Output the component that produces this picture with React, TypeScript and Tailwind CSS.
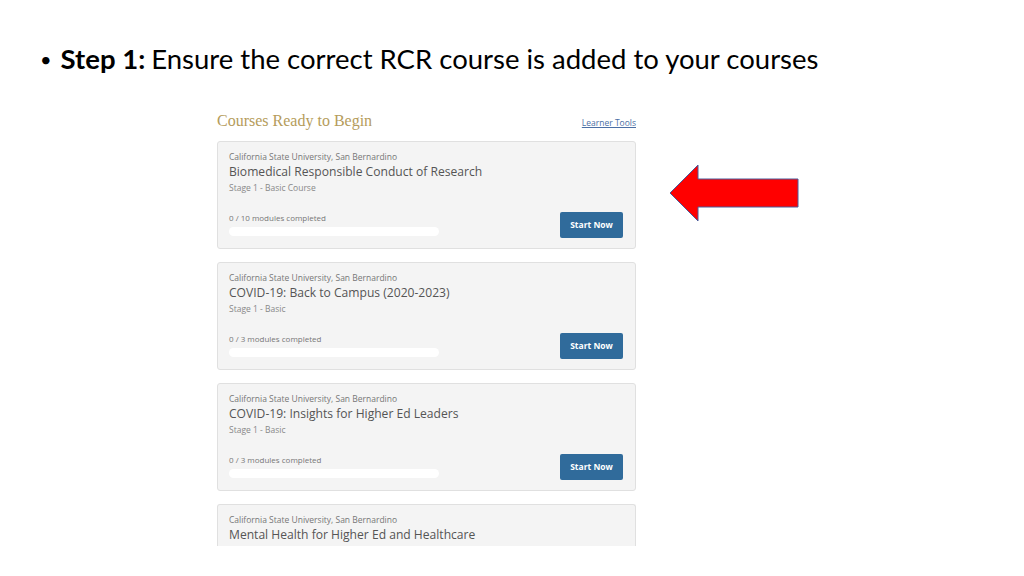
import React from "react";

const courses = [
  { title: "Biomedical Responsible Conduct of Research", stage: "Stage 1 - Basic Course", modules: "0 / 10 modules completed" },
  { title: "COVID-19: Back to Campus (2020-2023)", stage: "Stage 1 - Basic", modules: "0 / 3 modules completed" },
  { title: "COVID-19: Insights for Higher Ed Leaders", stage: "Stage 1 - Basic", modules: "0 / 3 modules completed" },
];

function Card({ c }: { c: (typeof courses)[number] }) {
  return (
    <div className="w-[419px] h-[108px] shrink-0 rounded-[3px] border border-[#e0e0e0] bg-[#f4f4f4] px-[11px] pt-[8px] text-[#555]" style={{ fontFamily: '"Open Sans", sans-serif' }}>
      <div className="text-[8.5px] leading-[13px] text-[#777]">California State University, San Bernardino</div>
      <div className="text-[12.1px] leading-[18px] text-[#555]">{c.title}</div>
      <div className="text-[8.5px] leading-[13px] text-[#888]">{c.stage}</div>
      <div className="mt-[18px] flex items-start justify-between">
        <div>
          <div className="text-[8px] leading-[12px] text-[#777]">{c.modules}</div>
          <div className="mt-[3px] h-[9px] w-[210px] rounded-full bg-white"></div>
        </div>
        <div className="mr-[1px] flex h-[26px] w-[63px] items-center justify-center rounded-[2px] bg-[#306b9b] text-[8.5px] font-bold text-white">Start Now</div>
      </div>
    </div>
  );
}

export default function App() {
  return (
    <div className="w-[1024px] h-[576px] overflow-hidden bg-white relative">
      <div className="pl-[40px] pt-[42px] flex items-center text-[27.5px] leading-[34px] text-black" style={{ fontFamily: 'Lato, "Open Sans", sans-serif' }}>
        <span className="mr-[9px] text-[20px]">•</span>
        <span className="font-bold">Step 1:</span>
        <span className="ml-[6px]">Ensure the correct RCR course is added to your courses</span>
      </div>
      <div className="ml-[217px] mt-[34px] w-[419px]">
        <div className="flex items-end justify-between h-[20px]">
          <div className="text-[16px] leading-[19px] text-[#b59c5b]" style={{ fontFamily: '"Liberation Serif", serif' }}>Courses Ready to Begin</div>
          <div className="text-[8.5px] underline text-[#4b6fa5]" style={{ fontFamily: '"Open Sans", sans-serif' }}>Learner Tools</div>
        </div>
        <div className="mt-[11px] flex flex-col gap-[13px]">
          {courses.map((c, i) => (
            <Card key={i} c={c} />
          ))}
          <div className="w-[419px] h-[42px] shrink-0 rounded-t-[3px] border border-b-0 border-[#e0e0e0] bg-[#f4f4f4] px-[11px] pt-[8px]" style={{ fontFamily: '"Open Sans", sans-serif' }}>
            <div className="text-[8.5px] leading-[13px] text-[#777]">California State University, San Bernardino</div>
            <div className="text-[12.1px] leading-[18px] text-[#555]">Mental Health for Higher Ed and Healthcare</div>
          </div>
        </div>
      </div>
      <svg className="absolute left-[668px] top-[163px]" width="134" height="62" viewBox="0 0 134 62">
        <polygon points="2,30 30,2 30,16 130,16 130,44 30,44 30,58" fill="#ff0000" stroke="#4a5a9a" strokeWidth="1" />
      </svg>
    </div>
  );
}
